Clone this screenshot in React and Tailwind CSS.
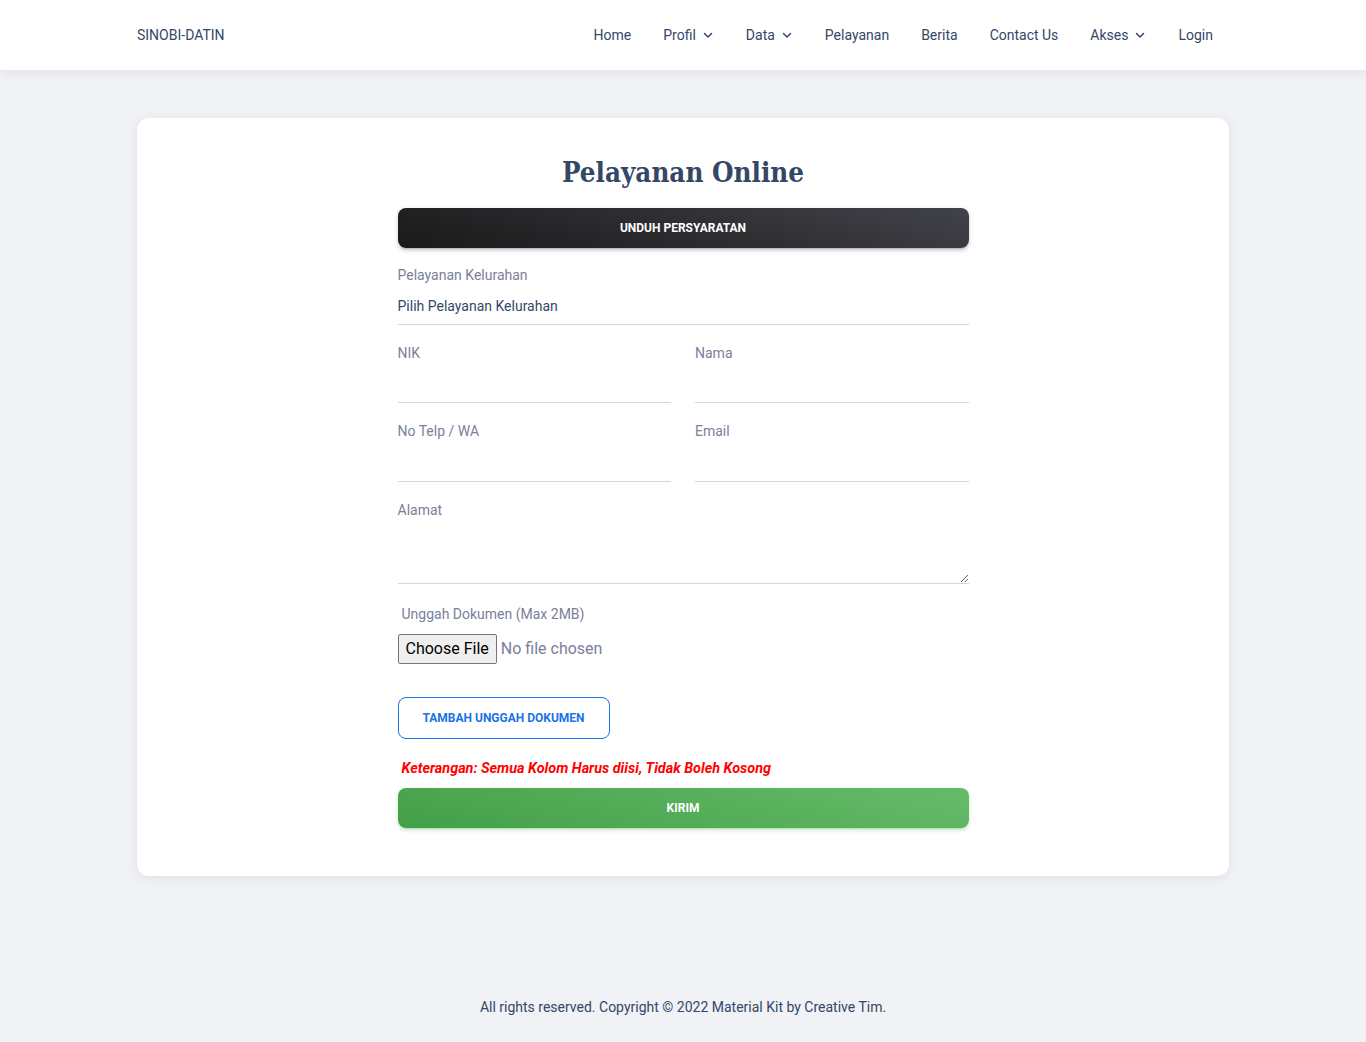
import React from 'react'

const ChevronDown = () => (
  <svg className="ml-[6px] h-[12px] w-[12px]" viewBox="0 0 24 24" fill="none" stroke="currentColor" strokeWidth={3} strokeLinecap="round" strokeLinejoin="round">
    <path d="M5 9l7 7 7-7" />
  </svg>
)

const navItems = [
  { label: 'Home' },
  { label: 'Profil', dropdown: true },
  { label: 'Data', dropdown: true },
  { label: 'Pelayanan' },
  { label: 'Berita' },
  { label: 'Contact Us' },
  { label: 'Akses', dropdown: true },
  { label: 'Login' }
]

const Field = ({ label, inputClass = 'h-[41px]' }) => (
  <div>
    <label className="block h-[20px] text-[14px] leading-[20px] text-[#7b809a]">{label}</label>
    <input type="text" className={`block w-full border-b border-[#d2d6da] bg-transparent text-[14px] text-[#344767] outline-none ${inputClass}`} />
  </div>
)

const App = () => {
  return (
    <div className="min-h-[1042px] bg-[#f0f2f5] font-['Roboto','Liberation_Sans',sans-serif] text-[#344767]">
      {/* Navbar */}
      <header className="h-[70px] bg-white shadow-[0_2px_12px_0_rgba(0,0,0,0.08)]">
        <div className="mx-auto flex h-full w-[1092px] items-center justify-between">
          <span className="text-[14px] text-[#344767]">SINOBI-DATIN</span>
          <nav className="flex items-center">
            {navItems.map(item => (
              <a key={item.label} className="flex items-center px-4 text-[14px] text-[#344767]">
                {item.label}
                {item.dropdown && <ChevronDown />}
              </a>
            ))}
          </nav>
        </div>
      </header>

      {/* Card */}
      <main className="mx-auto mt-[48px] w-[1092px] rounded-[12px] bg-white pb-[48px] pt-[32px] shadow-[0_2px_12px_0_rgba(0,0,0,0.08)]">
        <div className="mx-auto w-[571px]">
          <h1 className="h-[44px] text-center font-['DejaVu_Serif_Condensed','DejaVu_Serif',serif] text-[27.5px] font-bold leading-[44px] text-[#344767]">
            Pelayanan Online
          </h1>

          <button className="mt-[14px] flex h-[40px] w-full items-center justify-center rounded-[8px] bg-[linear-gradient(195deg,#42424a,#191919)] text-[12px] font-bold text-white shadow-[0_3px_3px_0_rgba(52,71,103,0.15),0_3px_1px_-2px_rgba(52,71,103,0.2),0_1px_5px_0_rgba(52,71,103,0.15)]">
            UNDUH PERSYARATAN
          </button>

          <div className="mt-[17px]">
            <label className="block h-[20px] text-[14px] leading-[20px] text-[#7b809a]">Pelayanan Kelurahan</label>
            <div className="flex h-[40px] items-center border-b border-[#d2d6da] pt-[4px] text-[14px] text-[#344767]">
              Pilih Pelayanan Kelurahan
            </div>
          </div>

          <div className="mt-[18px] grid grid-cols-2 gap-x-[24px]">
            <Field label="NIK" inputClass="h-[40px]" />
            <Field label="Nama" inputClass="h-[40px]" />
          </div>

          <div className="mt-[18px] grid grid-cols-2 gap-x-[24px]">
            <Field label="No Telp / WA" />
            <Field label="Email" />
          </div>

          <div className="mt-[18px]">
            <label className="block h-[20px] text-[14px] leading-[20px] text-[#7b809a]">Alamat</label>
            <textarea className="block h-[64px] w-full resize-y border-b border-[#d2d6da] bg-transparent text-[14px] text-[#344767] outline-none" />
          </div>

          <div className="mt-[20px] pl-[4px]">
            <label className="block h-[20px] text-[14px] leading-[20px] text-[#7b809a]">Unggah Dokumen (Max 2MB)</label>
          </div>

          <div className="mt-[10px] h-[30px]">
            <input
              type="file"
              className="h-[30px] text-[16px] text-[#7b809a] file:mr-[4px] file:h-[30px] file:rounded-[2px] file:border file:border-[#767676] file:bg-[#efefef] file:px-[7px] file:text-black"
            />
          </div>

          <button className="mt-[33px] flex h-[42px] w-[212px] items-center justify-center rounded-[8px] border border-[#1a73e8] bg-white text-[12px] font-bold text-[#1a73e8]">
            TAMBAH UNGGAH DOKUMEN
          </button>

          <p className="mt-[20px] h-[20px] pl-[4px] text-[14.4px] font-bold italic leading-[20px] text-[#ff0000]">
            Keterangan: Semua Kolom Harus diisi, Tidak Boleh Kosong
          </p>

          <button className="mt-[9px] flex h-[40px] w-full items-center justify-center rounded-[8px] bg-[linear-gradient(195deg,#66bb6a,#43a047)] text-[12px] font-bold text-white shadow-[0_3px_3px_0_rgba(76,175,80,0.15),0_3px_1px_-2px_rgba(76,175,80,0.2),0_1px_5px_0_rgba(76,175,80,0.15)]">
            KIRIM
          </button>
        </div>
      </main>

      {/* Footer */}
      <footer className="mt-[121px] pb-[25px] text-center text-[14px] leading-[20px] text-[#344767]">
        All rights reserved. Copyright © 2022 Material Kit by Creative Tim.
      </footer>
    </div>
  )
}

export default App
